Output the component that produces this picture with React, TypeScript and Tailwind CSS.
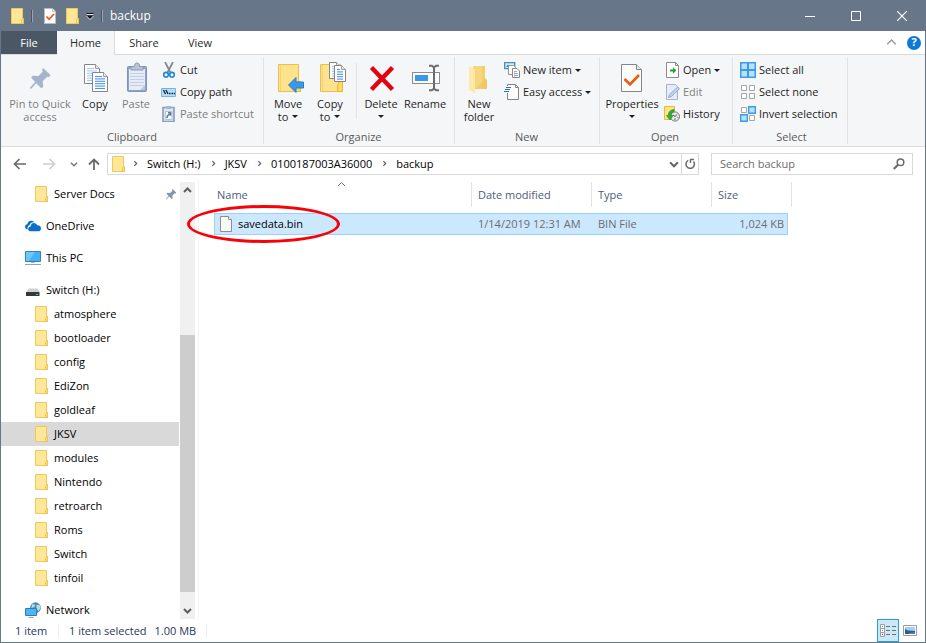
import { useState, type ReactNode } from 'react'
import clsx from 'clsx'

interface BigButtonProps {
  icon: ReactNode
  lines: string[]
  width: string
  disabled?: boolean
  menu?: boolean
}

interface SmallButtonProps {
  icon: ReactNode
  label: string
  disabled?: boolean
  menu?: boolean
}

const subFolders = [
  'atmosphere', 'bootloader', 'config', 'EdiZon', 'goldleaf', 'JKSV',
  'modules', 'Nintendo', 'retroarch', 'Roms', 'Switch', 'tinfoil',
]

const crumbs = ['Switch (H:)', 'JKSV', '0100187003A36000', 'backup']

const Caret = ({ className }: { className?: string }) => (
  <svg width="6" height="3" viewBox="0 0 6 3" className={clsx('inline-block shrink-0', className)}>
    <path d="M0 0h6L3 3z" fill="#1e1e1e" />
  </svg>
)

const Chevron = ({ direction, color = '#606060', size = 8, stroke = 1.6 }: { direction: 'up' | 'down' | 'right'; color?: string; size?: number; stroke?: number }) => {
  const paths = { up: 'M1 6l3.5-3.5L8 6', down: 'M1 3l3.5 3.5L8 3', right: 'M3 1.5L6 4.5 3 7.5' }
  return (
    <svg width={size} height={size} viewBox="0 0 9 9" fill="none" stroke={color} strokeWidth={stroke} className="shrink-0">
      <path d={paths[direction]} />
    </svg>
  )
}

const FolderIcon = () => (
  <svg width="14" height="16" viewBox="0 0 14 16" className="shrink-0">
    <path d="M.5.5h11v10h1v5H.5z" fill="#ffe698" stroke="#ecca55" />
    <path d="M10.500 15.500v-4l1-1h1v5z" fill="#ffdf85" stroke="#e6bf48" strokeWidth=".8" />
  </svg>
)

const CheckDocIcon = () => (
  <svg width="12" height="16" viewBox="0 0 12 16">
    <path d="M.5.5h8l3 3v12H.5z" fill="#fff" stroke="#b9bcc0" />
    <path d="M8.5.5v3h3" fill="#eee" stroke="#b9bcc0" />
    <path d="M2.5 8.5l2.6 2.8L10 6" fill="none" stroke="#e85614" strokeWidth="1.7" />
  </svg>
)

const PushPin = ({ size, color }: { size: number; color: string }) => (
  <svg width={size} height={size} viewBox="0 0 32 32" fill={color}>
    <path d="M19 6l7.500 7-1.700 2.300-1.700-.6-4.400 4.600.5 5.700-1.900 1.200-5.100-5L7.500 26.500 6 27l.3-1.700 4.900-5.300-4.200-4.600 1.800-1.700 5.700.3 4.400-4.500-.9-1.800z" />
  </svg>
)

// one sheet of paper with ruled lines, reused by the copy icons
const Sheet = ({ x, y, w, h, line }: { x: number; y: number; w: number; h: number; line: string }) => (
  <g transform={`translate(${x} ${y})`}>
    <path d={`M.5.5H${w - 4.5}l4 4V${h - 0.5}H.5z`} fill="#fff" stroke="#858585" />
    <path d={`M${w - 4.5}.5v4h4`} fill="#e9e9e9" stroke="#858585" strokeWidth=".8" />
    {Array.from({ length: Math.floor((h - 5) / 2.4) }, (_, i) => (
      <path key={i} d={`M3 ${4.5 + i * 2.4}H${i < 1 ? w - 6 : w - 3}`} stroke={line} strokeWidth="1.1" />
    ))}
  </g>
)

const BigFolder = () => (
  <g>
    <path d="M6.500 2.500h20v17h2v10h-22z" fill="#ffe28c" stroke="#e8c04a" />
    <path d="M23.500 29.500v-7l2-3h3v10z" fill="#ffd95e" stroke="#e3b93f" />
    <path d="M8.500 3v26" stroke="#f5d377" />
  </g>
)

const Big = ({ children }: { children: ReactNode }) => (
  <svg width="32" height="32" viewBox="0 0 32 32" fill="none" className="shrink-0">{children}</svg>
)

const Small = ({ children }: { children: ReactNode }) => (
  <svg width="16" height="16" viewBox="0 0 16 16" fill="none" className="shrink-0">{children}</svg>
)

const CopyIcon = () => (
  <Big>
    <Sheet x={5} y={2} w={16} h={20} line="#a9c9f2" />
    <Sheet x={13} y={10} w={16} h={20} line="#4b93e8" />
  </Big>
)

const PasteIcon = () => (
  <Big>
    <rect x="7.500" y="4.500" width="19" height="25" rx="1" fill="#8fa3c5" stroke="#8193b8" />
    <path d="M9 7h16v21H9z" fill="#e5ecf7" />
    <path d="M10 11.500h14M10 14.500h14M10 17.500h14M10 20.500h14M10 23.500h14" stroke="#c3cfe3" />
    <path d="M20 28l5-5v5z" fill="#b9c7df" />
    <path d="M11 8V4.500h3.500C14.500 2 15.500 1 17 1s2.500 1 2.500 3.500H23V8z" fill="#bac3d3" stroke="#8c98ae" />
  </Big>
)

const MoveIcon = () => (
  <Big>
    <BigFolder />
    <path d="M16.500 23l7.500-7.500v4.500h7.500v6H24v4.500z" fill="#3b98e8" stroke="#2a7fcb" />
  </Big>
)

const CopyToIcon = () => (
  <Big>
    <BigFolder />
    <Sheet x={15} y={0} w={12} h={17} line="#9fc4f3" />
    <Sheet x={20} y={3} w={12} h={17} line="#4b93e8" />
  </Big>
)

const DeleteIcon = () => (
  <Big>
    <path d="M6.500 5.500l21 22M27.500 5.500l-21 22" stroke="#e1040f" strokeWidth="4.400" />
  </Big>
)

const RenameIcon = () => (
  <Big>
    <rect x="3.500" y="10.500" width="27" height="11" fill="#fbfbfb" stroke="#8e8e8e" />
    <path d="M6 13h13v6H6z" fill="#3c97e6" />
    <path d="M20 3.800h3l2 1.700 2-1.700h3M20 28.200h3l2-1.700 2 1.700h3M25 5v22" stroke="#6c6c6c" strokeWidth="2" />
  </Big>
)

const NewFolderIcon = () => (
  <Big>
    <path d="M10 4h12v12l2 2v9H10z" fill="#f2cf6c" />
    <path d="M10 4h9v23h-9z" fill="#f6d77d" />
    <path d="M6 4l6 3.500V31l-6-3z" fill="#ffe9a8" />
    <path d="M12 27h12v-9l-2-1z" fill="#edc65c" opacity=".6" />
  </Big>
)

const PropertiesIcon = () => (
  <Big>
    <path d="M5.500 2.500h15l5 5v22h-20z" fill="#fcfcfc" stroke="#858585" />
    <path d="M20.500 2.500v5h5" fill="#e4e4e4" stroke="#858585" />
    <path d="M8.500 17l5.500 5.500L23 13" stroke="#ee5a12" strokeWidth="2.600" />
  </Big>
)

const CutIcon = () => (
  <Small>
    <path d="M4 0l5.500 10.500M12 0L6.500 10.500" stroke="#7e8791" strokeWidth="1.700" />
    <ellipse cx="5" cy="12.700" rx="2.300" ry="2.300" stroke="#1c87d6" strokeWidth="1.600" />
    <ellipse cx="11" cy="12.700" rx="2.300" ry="2.300" stroke="#1c87d6" strokeWidth="1.600" />
  </Small>
)

const CopyPathIcon = () => (
  <Small>
    <path d="M.5 4.500h14v8H.5z" fill="#b5dcf8" stroke="#78b3dc" />
    <path d="M2.500 6l2 4M5 6l2 4M8 9.500h1.500M10.500 9.500H12M12.700 9.500h1.300" stroke="#1d2b3b" strokeWidth="1.400" />
  </Small>
)

const PasteShortcutIcon = () => (
  <Small>
    <path d="M2 1.500h11v14H2z" fill="#dde6f3" stroke="#8c9fc2" strokeWidth="1.700" />
    <path d="M5 0h5v3H5z" fill="#aab5c9" />
    <path d="M4.500 5.500h6.500v8h-6.500z" fill="#fff" stroke="#b6c2d8" />
    <path d="M6 12c0-2.500 1-3.500 3-3.800M7 6.800h2.700v2.900" stroke="#5e7bad" strokeWidth="1.500" />
  </Small>
)

const NewItemIcon = () => (
  <Small>
    <path d="M.7.700h10v6H.7z" fill="#d4edfa" stroke="#4190b8" strokeWidth="1.300" />
    <path d="M2 5l2-2.500L6 5z" fill="#2e7ca5" />
    <path d="M4.500 3.500h5l2 2v7h-7z" fill="#fff" stroke="#929292" />
    <path d="M8.500 6.500h4.500l2.500 2.500v6.500h-7z" fill="#fff" stroke="#858585" />
    <path d="M10 9.500h3M10 11.500h4M10 13.500h4" stroke="#7fa9dc" />
    <path d="M10.500 9v6" stroke="#e69b9b" strokeWidth=".6" />
  </Small>
)

const EasyAccessIcon = () => (
  <Small>
    <path d="M3.500.500h8l3 3v12h-11z" fill="#fbfbfb" stroke="#858585" />
    <path d="M11.500.500v3h3" stroke="#858585" />
    <path d="M1.500 2h5v7h-5z" fill="#f5f6f7" />
    <path d="M2 3.500h5M1 5.500h5M0 7.500h5" stroke="#2b6fb5" strokeWidth="1.200" />
  </Small>
)

const OpenIcon = () => (
  <Small>
    <path d="M2.500.500h9l3 3v12h-12z" fill="#fff" stroke="#8a8a8a" />
    <path d="M11.500.500v3h3" stroke="#8a8a8a" />
    <path d="M6 8.500h4" stroke="#1fa42a" strokeWidth="2" />
    <path d="M9 5.300L12.300 8.500 9 11.700z" fill="#1fa42a" />
  </Small>
)

const EditIcon = () => (
  <Small>
    <path d="M2.500.500h9l2 2v13h-11z" fill="#e6edf8" stroke="#a2b4d6" />
    <path d="M4.500 13.500l1.200-3 8-7.500 1.800 1.800-8 7.500z" fill="#c8d5ec" stroke="#8ea5cd" />
  </Small>
)

const HistoryIcon = () => (
  <Small>
    <path d="M.5.500h10v13H.5z" fill="#ffe28c" stroke="#e2bd3c" />
    <circle cx="11" cy="10.500" r="4.600" fill="#e4e6e8" stroke="#7b7f84" />
    <path d="M11 10.500l2.200-2M11 10.500l-2-1.500M11 12.500v1.500M13.500 11.500h1" stroke="#555" />
    <path d="M10 3.500C6 3.800 4.300 6.500 4.300 9.500H2.500L6 14l3.200-4.500H7.300c0-2 .7-3.500 2.700-4z" fill="#2fae35" stroke="#1a8a24" strokeWidth=".6" />
  </Small>
)

const SelectAllIcon = () => (
  <Small>
    <path d="M0 0h16v16H0z" fill="#3a9be9" />
    <path d="M1.500 1.500H7V7H1.500zM9 1.500h5.500V7H9zM1.500 9H7v5.500H1.500zM9 9h5.500v5.500H9z" fill="#b9e1fd" />
  </Small>
)

const SelectNoneIcon = () => (
  <Small>
    <path d="M1.500 1.500h5v5h-5zM9.500 1.500h5v5h-5zM1.500 9.500h5v5h-5zM9.500 9.500h5v5h-5z" fill="#fff" stroke="#a5a5a5" />
  </Small>
)

const InvertIcon = () => (
  <Small>
    <path d="M1.500 1.500h5v5h-5zM9.500 9.500h5v5h-5z" fill="#fff" stroke="#a5a5a5" />
    <path d="M8.700.700h6.600v6.600H8.700zM.7 8.700h6.600v6.600H.7z" fill="#b9e1fd" stroke="#3a9be9" strokeWidth="1.400" />
  </Small>
)

const OneDriveIcon = () => (
  <Small>
    <path d="M2.800 11.500C1 11.300 0 10.200 0 8.800 0 7.300 1 6.400 2.300 6.200 2.600 4 4.200 2.700 6.200 2.700c1.300 0 2.300.5 3.100 1.500-2.600-.4-4.500 1-4.800 3.100C3 7.700 2.100 9.400 2.800 11.500z" fill="#0d6fc9" />
    <path d="M5.800 13.300c-1.600 0-2.600-1-2.600-2.400 0-1.500 1-2.400 2.400-2.500.1-2 1.500-3.300 3.300-3.300 1.500 0 2.700.8 3.200 2.200 2.300-.2 3.900 1.100 3.900 3.100 0 1.700-1.100 2.900-2.900 2.900z" fill="#0d6fc9" />
  </Small>
)

const PcIcon = () => (
  <Small>
    <path d="M.5 1.500h15v10H.5z" fill="#46b2f4" stroke="#3582b4" />
    <path d="M1 2h9L4 11H1z" fill="#6cc7fa" />
    <path d="M6 12h4v1H6z" fill="#b0bcc5" />
    <path d="M0 14.500h16" stroke="#8aa6bb" />
  </Small>
)

const DriveIcon = () => (
  <Small>
    <path d="M3.500 6.500h9l2 3.500h-13z" fill="#d0d1d2" />
    <path d="M1 10h13.500v4H1z" fill="#353739" />
    <path d="M11 12h2v1h-2z" fill="#36e067" />
  </Small>
)

const NetworkIcon = () => (
  <Small>
    <circle cx="10.500" cy="5.700" r="5.400" fill="#4d8fb0" />
    <path d="M7 2.500c2-.9 3.500 0 3 1.500s-2.500 1-3.500 2.500zM11.500 3l2.700-.5 1.500 3-2 3.500-2.200-2z" fill="#b8dbe6" />
    <path d="M.5 6.500h11v7H.5z" fill="#4cb6f5" stroke="#2f7eaf" />
    <path d="M3.500 15.500h5" stroke="#8aa6bb" />
  </Small>
)

function BigButton({ icon, lines, width, disabled, menu }: BigButtonProps) {
  return (
    <button
      disabled={disabled}
      className={clsx('flex flex-col items-center pt-[3px] leading-[13px]', width, disabled ? 'text-[#7e7e7e]' : 'text-[#1e1e1e]')}
    >
      {icon}
      <span className="mt-[3px] whitespace-nowrap">{lines[0]}</span>
      {(lines[1] || menu) && (
        <span className="flex h-[13px] items-center gap-1 whitespace-nowrap">
          {lines[1]}
          {menu && <Caret />}
        </span>
      )}
    </button>
  )
}

function SmallButton({ icon, label, disabled, menu }: SmallButtonProps) {
  return (
    <button
      disabled={disabled}
      className={clsx('flex h-[22px] items-center gap-[3px] whitespace-nowrap', disabled ? 'text-[#7e7e7e]' : 'text-[#1e1e1e]')}
    >
      {icon}
      <span>{label}</span>
      {menu && <Caret />}
    </button>
  )
}

function RibbonGroup({ label, className, children }: { label: string; className: string; children: ReactNode }) {
  return (
    <section aria-label={label} className={clsx('my-0.5 flex shrink-0 flex-col border-r border-[#e2e3e4] pt-0.5', className)}>
      <div className="flex h-[71px]">{children}</div>
      <div className="-ml-1 text-center leading-[14px] text-[#5a5a5a]">{label}</div>
    </section>
  )
}

function TitleBar() {
  return (
    <header className="flex h-[31px] shrink-0 items-center bg-[#68768a] text-white">
      <div className="flex items-center pl-2.5">
        <FolderIcon />
        <span className="ml-1.5 h-3 w-0.5 border-l border-[#4c5664] bg-[#9aa3af]" />
        <button aria-label="Properties" className="ml-[11px]"><CheckDocIcon /></button>
        <button aria-label="New folder" className="ml-2.5"><FolderIcon /></button>
        <button aria-label="Customize Quick Access Toolbar" className="ml-1.5">
          <svg width="8" height="8" viewBox="0 0 8 8">
            <path d="M.5 1.500h7" stroke="#111" />
            <path d="M.5 2.500h7" stroke="#dfe2e6" />
            <path d="M0 4h8L4 8z" fill="#e3e5e8" />
            <path d="M.5 3.500h7L4 7z" fill="#111" />
          </svg>
        </button>
        <span className="ml-[7px] h-3 w-0.5 border-l border-[#4c5664] bg-[#9aa3af]" />
        <h1 className="ml-[7px] text-xs">backup</h1>
      </div>
      <div className="ml-auto flex h-full">
        <button aria-label="Minimize" className="flex w-[46px] items-center justify-center">
          <svg width="10" height="10" stroke="#fff"><path d="M0 5.500h10" /></svg>
        </button>
        <button aria-label="Maximize" className="flex w-[46px] items-center justify-center">
          <svg width="10" height="10" stroke="#fff" fill="none"><path d="M.5.500h9v9h-9z" /></svg>
        </button>
        <button aria-label="Close" className="flex w-[46px] items-center justify-center">
          <svg width="10" height="10" stroke="#fff" strokeWidth="1.200"><path d="M0 0l10 10M10 0L0 10" /></svg>
        </button>
      </div>
    </header>
  )
}

function Tabs() {
  return (
    <nav className="flex h-6 shrink-0 border-b border-[#dadbdc] text-[#2b2b2b]">
      <button className="w-14 bg-[#4c5766] pt-0.5 text-white">File</button>
      <button className="-mb-px w-[58px] border-r border-[#dadbdc] bg-[#f5f6f7] pt-px">Home</button>
      <button className="w-[58px] pt-0.5">Share</button>
      <button className="w-[54px] pt-0.5">View</button>
      <div className="ml-auto flex items-center gap-2.5 pr-1">
        <button aria-label="Minimize the Ribbon"><Chevron direction="up" color="#9a9a9a" size={11} stroke={1.2} /></button>
        <button aria-label="Help" className="flex size-3.5 items-center justify-center rounded-full bg-[#0e78d5] font-bold text-white">?</button>
      </div>
    </nav>
  )
}

function Ribbon() {
  return (
    <div className="flex h-[92px] shrink-0 overflow-hidden border-b border-[#dadbdc] bg-[#f5f6f7]">
      <RibbonGroup label="Clipboard" className="w-[263px] pl-1">
        <BigButton icon={<PushPin size={32} color="#a5b4cd" />} lines={['Pin to Quick', 'access']} width="w-[70px]" disabled />
        <BigButton icon={<CopyIcon />} lines={['Copy']} width="w-10" />
        <BigButton icon={<PasteIcon />} lines={['Paste']} width="w-[42px]" disabled />
        <div className="ml-1 flex flex-col">
          <SmallButton icon={<CutIcon />} label="Cut" />
          <SmallButton icon={<CopyPathIcon />} label="Copy path" />
          <SmallButton icon={<PasteShortcutIcon />} label="Paste shortcut" disabled />
        </div>
      </RibbonGroup>

      <RibbonGroup label="Organize" className="w-[191px] pl-[3px]">
        <BigButton icon={<MoveIcon />} lines={['Move', 'to']} width="w-[42px]" menu />
        <BigButton icon={<CopyToIcon />} lines={['Copy', 'to']} width="w-[42px]" menu />
        <div className="mt-1 mr-[3px] ml-[5px] h-[56px] w-px bg-[#e2e3e4]" />
        <BigButton icon={<DeleteIcon />} lines={['Delete']} width="w-[42px]" menu />
        <BigButton icon={<RenameIcon />} lines={['Rename']} width="w-[46px]" />
      </RibbonGroup>

      <RibbonGroup label="New" className="w-[145px] pl-[3px]">
        <BigButton icon={<NewFolderIcon />} lines={['New', 'folder']} width="w-[42px]" />
        <div className="ml-1 flex flex-col">
          <SmallButton icon={<NewItemIcon />} label="New item" menu />
          <SmallButton icon={<EasyAccessIcon />} label="Easy access" menu />
        </div>
      </RibbonGroup>

      <RibbonGroup label="Open" className="w-[133px] pl-0.5">
        <BigButton icon={<PropertiesIcon />} lines={['Properties']} width="w-[60px]" menu />
        <div className="ml-0.5 flex flex-col">
          <SmallButton icon={<OpenIcon />} label="Open" menu />
          <SmallButton icon={<EditIcon />} label="Edit" disabled />
          <SmallButton icon={<HistoryIcon />} label="History" />
        </div>
      </RibbonGroup>

      <RibbonGroup label="Select" className="w-[115px] pl-[7px]">
        <div className="flex flex-col">
          <SmallButton icon={<SelectAllIcon />} label="Select all" />
          <SmallButton icon={<SelectNoneIcon />} label="Select none" />
          <SmallButton icon={<InvertIcon />} label="Invert selection" />
        </div>
      </RibbonGroup>
    </div>
  )
}

function AddressRow() {
  const [query, setQuery] = useState('')

  return (
    <div className="flex h-[33px] shrink-0 items-center pr-3 pl-3">
      <button aria-label="Back">
        <svg width="13" height="12" viewBox="0 0 13 12" fill="none" stroke="#6a6a6a" strokeWidth="1.700"><path d="M13 6H1.500M6.500 1l-5 5 5 5" /></svg>
      </button>
      <button aria-label="Forward" disabled className="ml-[17px]">
        <svg width="13" height="12" viewBox="0 0 13 12" fill="none" stroke="#cfcfcf" strokeWidth="1.700"><path d="M0 6h11.500M6.500 1l5 5-5 5" /></svg>
      </button>
      <button aria-label="Recent locations" className="ml-3.5"><Chevron direction="down" color="#777" /></button>
      <button aria-label="Up" className="ml-2.5">
        <svg width="12" height="12" viewBox="0 0 12 12" fill="none" stroke="#6a6a6a" strokeWidth="1.800"><path d="M6 12V1.500M1 6.500l5-5 5 5" /></svg>
      </button>

      <div className="ml-[7px] flex h-[22px] flex-1 items-center border border-[#d9d9d9] pl-1 text-black">
        <FolderIcon />
        {crumbs.map((crumb) => (
          <span key={crumb} className="flex items-center">
            <span className="mr-2 ml-1.5"><Chevron direction="right" size={7} /></span>
            <button className="pt-px pr-[3px] whitespace-nowrap">{crumb}</button>
          </span>
        ))}
        <button aria-label="Previous locations" className="mr-0.5 ml-auto"><Chevron direction="down" size={10} stroke={1.8} /></button>
        <button aria-label="Refresh" className="flex h-full w-[17px] items-center justify-center border-l border-[#d9d9d9]">
          <svg width="11" height="12" viewBox="0 0 11 12" fill="none" stroke="#6a6a6a" strokeWidth="1.500">
            <path d="M3.300 2.400A4.200 4.200 0 1 0 8.500 3.500" />
            <path d="M5.500.7v4.200M5 1.500h4" strokeWidth="1.400" />
          </svg>
        </button>
      </div>

      <div className="ml-3 flex h-[22px] w-[202px] items-center border border-[#d9d9d9] pr-[7px] pl-2">
        <input
          type="text"
          aria-label="Search backup"
          placeholder="Search backup"
          value={query}
          onChange={(e) => setQuery(e.target.value)}
          className="min-w-0 flex-1 pt-px outline-none placeholder:text-[#6d6d6d]"
        />
        <svg width="12" height="12" viewBox="0 0 12 12" fill="none" stroke="#6a6a6a">
          <circle cx="7.500" cy="4.300" r="3.300" strokeWidth="1.500" />
          <path d="M5 6.800L.8 11" strokeWidth="2" />
        </svg>
      </div>
    </div>
  )
}

function TreeItem({ icon, label, className, nested, pinned, onClick, selected }: {
  icon: ReactNode
  label: string
  className?: string
  nested?: boolean
  pinned?: boolean
  selected?: boolean
  onClick?: () => void
}) {
  return (
    <li className={className}>
      <button
        onClick={onClick}
        className={clsx('flex h-6 w-full items-center gap-[5px] text-left', nested ? 'pl-[34px]' : 'pl-6', selected && 'bg-[#d9d9d9]')}
      >
        {icon}
        <span className="flex-1">{label}</span>
        {pinned && <PushPin size={16} color="#8296ab" />}
      </button>
    </li>
  )
}

function NavTree() {
  const [selected, setSelected] = useState('JKSV')

  return (
    <>
      <ul className="w-[178px] shrink-0 overflow-hidden pt-0.5 text-black">
        <TreeItem icon={<FolderIcon />} label="Server Docs" nested pinned />
        <TreeItem icon={<OneDriveIcon />} label="OneDrive" className="mt-2" />
        <TreeItem icon={<PcIcon />} label="This PC" className="mt-2" />
        <TreeItem icon={<DriveIcon />} label="Switch (H:)" className="mt-2" />
        {subFolders.map((name) => (
          <TreeItem key={name} icon={<FolderIcon />} label={name} nested selected={name === selected} onClick={() => setSelected(name)} />
        ))}
        <TreeItem icon={<NetworkIcon />} label="Network" className="mt-2" />
      </ul>
      {/* Scrollbar */}
      <div className="mt-0.5 ml-px flex w-[15px] shrink-0 flex-col items-center bg-[#f0f0f0]">
        <div className="flex h-[17px] items-center"><Chevron direction="up" size={9} stroke={2} /></div>
        <div className="grow-[136]" />
        <div className="w-full grow-[257] bg-[#cdcdcd]" />
        <div className="grow-[10]" />
        <div className="flex h-[17px] items-center"><Chevron direction="down" size={9} stroke={2} /></div>
      </div>
    </>
  )
}

function FileList() {
  const headCell = 'flex h-[25px] items-center border-r border-[#e2e2e2] pt-px'

  return (
    <main className="relative ml-[3px] min-w-0 flex-1 border-l border-[#f2f2f2] pt-0.5 pl-[15px]">
      <table className="w-[578px] table-fixed border-separate border-spacing-0">
        <colgroup>
          <col className="w-[258px]" />
          <col className="w-[120px]" />
          <col className="w-[120px]" />
          <col className="w-[76px]" />
          <col className="w-1" />
        </colgroup>
        <thead className="text-left text-[#4c607a]">
          <tr className="h-[31px] align-top">
            <th className="p-0 font-normal">
              <div className={clsx(headCell, 'relative pl-[3px]')}>
                Name
                <span className="absolute -top-0.5 left-[123px]"><Chevron direction="up" color="#6d6d6d" size={9} stroke={1} /></span>
              </div>
            </th>
            <th className="p-0 font-normal"><div className={clsx(headCell, 'pl-1.5')}>Date modified</div></th>
            <th className="p-0 font-normal"><div className={clsx(headCell, 'pl-1.5')}>Type</div></th>
            <th colSpan={2} className="p-0 font-normal"><div className={clsx(headCell, 'pl-1.5')}>Size</div></th>
          </tr>
        </thead>
        <tbody>
          <tr className="h-[22px] text-[#6d6d6d] *:border-y *:border-[#99d1ff] *:bg-[#cce8ff] *:py-0">
            <td className="border-l pr-0 pl-[5px] text-black">
              <div className="flex items-center gap-[5px]">
                <svg width="13" height="16" viewBox="0 0 13 16">
                  <path d="M.5.500h8l3 3v12H.5z" fill="#f8f8f8" stroke="#8d8d8d" />
                  <path d="M8.500.500v3h3" fill="#fff" stroke="#8d8d8d" />
                </svg>
                savedata.bin
              </div>
            </td>
            <td className="pr-0 pl-1.5 whitespace-nowrap">1/14/2019 12:31 AM</td>
            <td className="pl-1.5">BIN File</td>
            <td className="border-r pr-[3px] text-right whitespace-nowrap">1,024 KB</td>
          </tr>
        </tbody>
      </table>
      {/* Red ring around the save file */}
      <div className="pointer-events-none absolute top-[25px] -left-3 h-[38px] w-[153px] rounded-[50%] border-3 border-[#fb0007]" />
    </main>
  )
}

function StatusBar() {
  return (
    <footer className="flex h-[23px] shrink-0 items-center pl-3.5 text-[#1e395b]">
      <span className="w-[43px] pt-px">1 item</span>
      <span className="h-3 w-px bg-[#ececec]" />
      <span className="ml-2.5 pt-px">1 item selected</span>
      <span className="ml-2 pt-px">1.00 MB</span>
      <span className="ml-2.5 h-3 w-px bg-[#ececec]" />
      <div className="ml-auto flex h-full items-center gap-1 pr-2">
        <button aria-label="Details view" className="flex h-full w-[22px] items-center justify-center border border-[#26a0da] bg-[#cbe8f6]">
          <svg width="17" height="14" viewBox="0 0 17 14" fill="none">
            <path d="M.5.500h4v4h-4zM.5 4.500h4v4h-4zM.5 8.500h4v4h-4z" fill="#fff" stroke="#9c9c9c" />
            <path d="M2 2h1v1H2z" fill="#4d8bc4" />
            <path d="M2 6h1v1H2z" fill="#4d8bc4" />
            <path d="M2 10h1v1H2z" fill="#d22" />
            <path d="M6 2.500h4M12 2.500h4M6 6.500h4M12 6.500h4M6 10.500h4M12 10.500h4" stroke="#6f6f6f" />
          </svg>
        </button>
        <button aria-label="Large icons view" className="flex items-center">
          <svg width="14" height="11" viewBox="0 0 14 11">
            <path d="M.5.500h13v10H.5z" fill="#fff" stroke="#9c9c9c" />
            <path d="M2 2h10v7H2z" fill="#a6cdf0" />
            <path d="M2 4l3 1.500 7 .5v3H2z" fill="#2b5e87" />
            <path d="M6 8l6-1v2H6z" fill="#4f7fc0" />
          </svg>
        </button>
      </div>
    </footer>
  )
}

export default function App() {
  return (
    <div className="flex h-screen flex-col overflow-hidden border-x border-b border-[#68768a] bg-white font-['Open_Sans','Noto_Sans',sans-serif] text-[11px]">
      <TitleBar />
      <Tabs />
      <Ribbon />
      <AddressRow />
      <div className="flex min-h-0 flex-1">
        <NavTree />
        <FileList />
      </div>
      <StatusBar />
    </div>
  )
}
